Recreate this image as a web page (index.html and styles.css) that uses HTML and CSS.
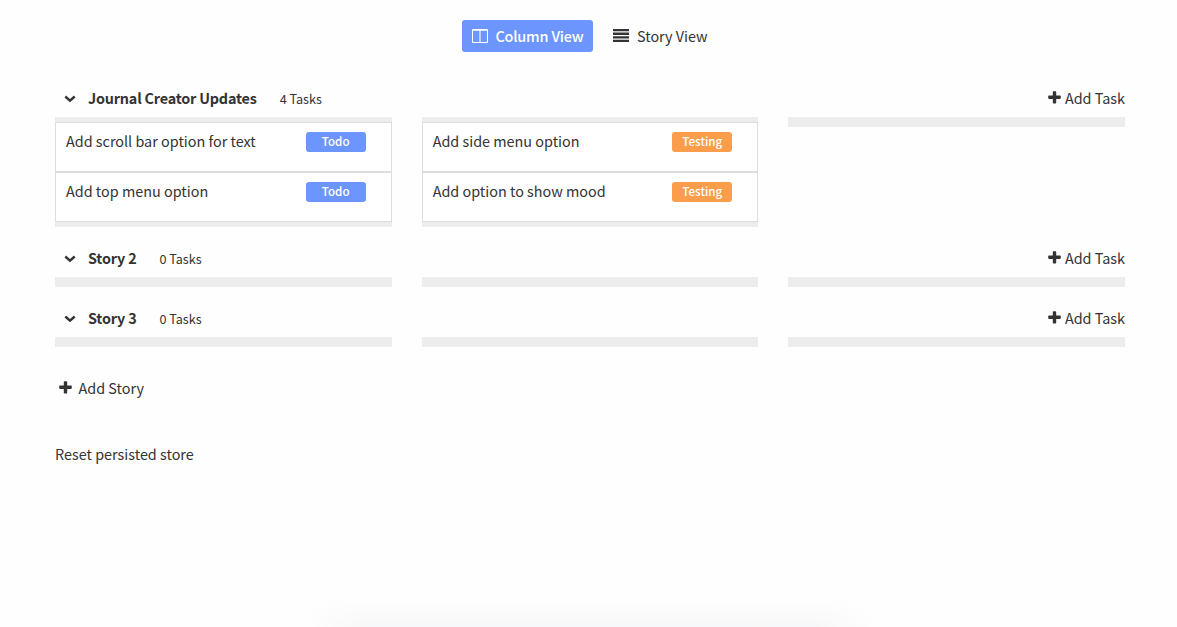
FILE: index.html
```html
<!DOCTYPE html>
<html lang="en">
<head>
<meta charset="utf-8">
<title>Stories</title>
<link rel="stylesheet" href="styles.css">
</head>
<body>
<svg class="sprite" aria-hidden="true">
  <symbol id="plus" viewBox="0 0 13 13"><path d="M4.8 1Q4.8 .2 5.6 .2H7.4Q8.2 .2 8.2 1V4.6H12Q12.8 4.6 12.8 5.4V7.1Q12.8 7.9 12 7.9H8.2V11.8Q8.2 12.6 7.4 12.6H5.6Q4.8 12.6 4.8 11.8V7.9H1Q.2 7.9 .2 7.1V5.4Q.2 4.6 1 4.6H4.8Z"/></symbol>
  <symbol id="chevron" viewBox="0 0 12 8"><path d="M1.3 1.5L6 5.7L10.7 1.5" fill="none" stroke="currentColor" stroke-width="2.4"/></symbol>
</svg>
<main class="page">
  <nav class="views">
    <a class="view view-active"><svg class="view-icon" viewBox="0 0 16 14"><path d="M.5 1.5Q.5 .5 1.5 .5H14.5Q15.5 .5 15.5 1.5V12.5Q15.5 13.5 14.5 13.5H1.5Q.5 13.5 .5 12.5ZM1 1.3H15M8 .5V13.5" fill="none" stroke="currentColor" stroke-width="1.1"/></svg><span>Column View</span></a>
    <a class="view"><svg class="view-icon" viewBox="0 0 16 14"><path d="M0 0H16V2.3H0ZM0 3.6H16V5.9H0ZM0 7.2H16V9.5H0ZM0 10.8H16V13.1H0Z"/></svg><span>Story View</span></a>
  </nav>

  <section class="story">
    <header class="story-head"><svg class="chevron"><use href="#chevron"/></svg><h2 class="title">Journal Creator Updates</h2><span class="count">4 Tasks</span><a class="add-task"><svg class="plus"><use href="#plus"/></svg>Add Task</a></header>
    <div class="columns">
      <div class="column">
        <div class="task"><span>Add scroll bar option for text</span><span class="badge">Todo</span></div>
        <div class="task"><span>Add top menu option</span><span class="badge">Todo</span></div>
      </div>
      <div class="column">
        <div class="task"><span>Add side menu option</span><span class="badge badge-testing">Testing</span></div>
        <div class="task"><span>Add option to show mood</span><span class="badge badge-testing">Testing</span></div>
      </div>
      <div class="column"></div>
    </div>
  </section>

  <section class="story">
    <header class="story-head"><svg class="chevron"><use href="#chevron"/></svg><h2 class="title">Story 2</h2><span class="count">0 Tasks</span><a class="add-task"><svg class="plus"><use href="#plus"/></svg>Add Task</a></header>
    <div class="columns"><div class="column"></div><div class="column"></div><div class="column"></div></div>
  </section>

  <section class="story">
    <header class="story-head"><svg class="chevron"><use href="#chevron"/></svg><h2 class="title">Story 3</h2><span class="count">0 Tasks</span><a class="add-task"><svg class="plus"><use href="#plus"/></svg>Add Task</a></header>
    <div class="columns"><div class="column"></div><div class="column"></div><div class="column"></div></div>
  </section>

  <a class="add-story"><svg class="plus"><use href="#plus"/></svg>Add Story</a>
  <a class="reset">Reset persisted store</a>
</main>
<div class="bottom-glow"></div>
</body>
</html>
```
FILE: styles.css
```css
* { box-sizing: border-box; }
body {
  display: flex;
  flex-direction: column;
  margin: 0;
  height: 627px;
  overflow: hidden;
  background: #fefefe;
  color: #333;
  font: 14.4px/20px "Noto Sans CJK SC", "Noto Sans", sans-serif;
  white-space: nowrap;
}
svg { display: block; flex: none; fill: currentColor; }
.sprite { position: absolute; width: 0; height: 0; }
.page { width: 1070px; margin-left: 55px; padding-top: 20px; }
.views { display: flex; gap: 10px; margin: 0 0 25px 407px; }
.view {
  display: flex;
  align-items: center;
  gap: 8px;
  height: 32px;
  padding: 0 10px;
  border-radius: 3px;
}
.view-active { width: 131px; gap: 7.4px; background: #6c96fe; color: #fff; font-weight: 500; letter-spacing: -.16px; }
.view-icon { width: 16px; height: 14px; }
.story { margin-bottom: 10px; }
.story-head { display: flex; align-items: center; height: 40px; padding: 2px 0 0 9px; }
.chevron { width: 12px; height: 8px; margin: 1px 12px 0 0; }
.title { margin: 0 23px 0 0; font-size: 14.4px; font-weight: 700; letter-spacing: -.2px; }
.count { padding-top: 1px; font-size: 12.6px; }
.add-task { display: flex; align-items: center; gap: 3.5px; margin-left: auto; }
.plus { width: 13px; height: 13px; margin-bottom: 1px; }
.columns { display: grid; grid-template-columns: repeat(3, 1fr); gap: 30px; align-items: start; }
.column { padding: 5px 0; background: #ededed; }
.task {
  display: flex;
  justify-content: space-between;
  height: 50px;
  padding: 9px 25px 0 10px;
  border: 1px solid #ddd;
  background: #fff;
  line-height: 18px;
}
.badge {
  width: 60px;
  height: 20px;
  border-radius: 3px;
  background: #6c96fe;
  color: #fff;
  font-size: 11.6px;
  font-weight: 500;
  line-height: 19px;
  text-align: center;
}
.badge-testing { background: #fb9d4b; }
.add-story { display: flex; align-items: center; gap: 6.5px; margin-top: 21px; padding-left: 4px; height: 40px; }
.reset { display: block; margin-top: 36px; }
.bottom-glow {
  width: 570px;
  height: 27px;
  margin: auto 0 0 305px;
  background:
    linear-gradient(90deg, #fefefe, rgba(254, 254, 254, 0) 60px, rgba(254, 254, 254, 0) 510px, #fefefe),
    linear-gradient(rgba(70, 80, 110, 0), rgba(70, 80, 110, .04));
}
```
